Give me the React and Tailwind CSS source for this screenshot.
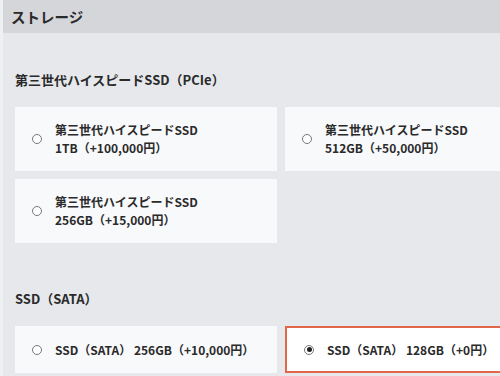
import React from 'react';

const font = { fontFamily: '"Noto Sans CJK JP", "Noto Sans", sans-serif' };

const Radio = ({ checked }) => (
    <span className="flex h-[10px] w-[10px] shrink-0 items-center justify-center rounded-full border border-[#777] bg-white">
        {checked && <span className="h-[5px] w-[5px] rounded-full bg-[#222]" />}
    </span>
);

const Option = ({ lines, checked }) => (
    <div
        className={`flex items-center gap-[13px] pl-[17px] ${
            checked ? 'border-2 border-[#e0674a] bg-white pl-[15px]' : 'bg-[#f8f9fb]'
        } ${lines.length > 1 ? 'h-[64px]' : 'h-[47px]'}`}
    >
        <Radio checked={checked} />
        <div className="text-[12px] font-bold leading-[18px] text-[#2a2a2a]">
            {lines.map((l) => (
                <div key={l}>{l}</div>
            ))}
        </div>
    </div>
);

export default function App() {
    return (
        <div className="h-[376px] w-[500px] overflow-hidden bg-[#eef0f2] pl-[3px]" style={font}>
            <div className="flex h-[33px] items-center bg-[#d5d6da] pl-[8px] text-[14.5px] font-bold text-[#2a2a2a]">
                ストレージ
            </div>
            <div className="h-full bg-[#e6e8ec] pl-[12px]">
                <h3 className="pt-[38px] text-[13px] font-bold leading-[18px] text-[#2a2a2a]">
                    第三世代ハイスピードSSD（PCIe）
                </h3>
                <div className="mt-[18px] grid grid-cols-[262px_262px] gap-[8px]">
                    <Option lines={['第三世代ハイスピードSSD', '1TB（+100,000円）']} />
                    <Option lines={['第三世代ハイスピードSSD', '512GB（+50,000円）']} />
                    <Option lines={['第三世代ハイスピードSSD', '256GB（+15,000円）']} />
                </div>
                <h3 className="pt-[47px] text-[13px] font-bold leading-[18px] text-[#2a2a2a]">SSD（SATA）</h3>
                <div className="mt-[18px] grid grid-cols-[262px_262px] gap-[8px]">
                    <Option lines={['SSD（SATA） 256GB（+10,000円）']} />
                    <Option lines={['SSD（SATA） 128GB（+0円）']} checked />
                </div>
            </div>
        </div>
    );
}
